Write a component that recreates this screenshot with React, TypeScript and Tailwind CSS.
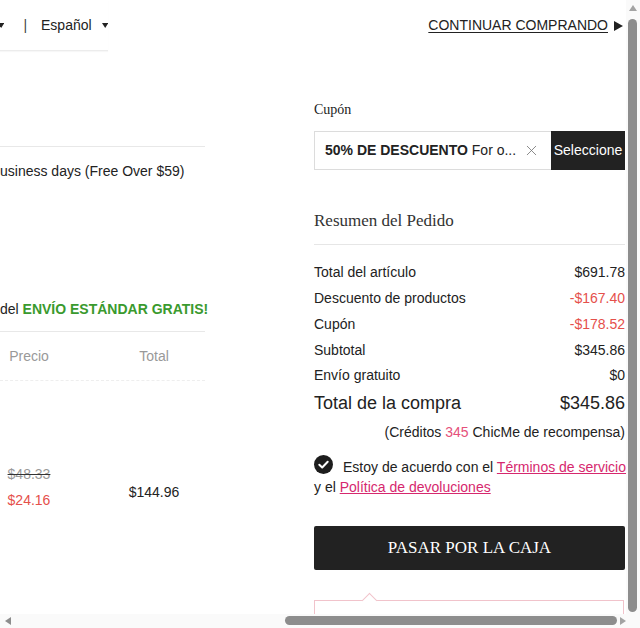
import { X } from "lucide-react";

function Caret({ className = "" }: { className?: string }) {
  return (
    <svg width="9" height="7" viewBox="0 0 9 7" className={className}>
      <path d="M0 0 H9 L4.5 7 Z" fill="#222" />
    </svg>
  );
}

function Row({ label, value, red }: { label: string; value: string; red?: boolean }) {
  return (
    <div className="flex h-[25.75px] items-center justify-between text-[14px]">
      <span>{label}</span>
      <span className={red ? "text-[#e5504b]" : ""}>{value}</span>
    </div>
  );
}

function Scrollbars() {
  return (
    <>
      {/* vertical */}
      <div className="absolute right-0 top-0 h-[628px] w-[14px] bg-[#fafafa]">
        <svg width="8" height="6" viewBox="0 0 8 6" className="absolute left-[3px] top-[5px]">
          <path d="M0 6 L4 0 L8 6 Z" fill="#a3a3a3" />
        </svg>
        <div className="absolute left-[2px] top-[19px] h-[593px] w-[9px] rounded-full bg-[#8d8d8d]" />
        <svg width="8" height="6" viewBox="0 0 8 6" className="absolute left-[3px] top-[602px]">
          <path d="M0 0 H8 L4 6 Z" fill="#8d8d8d" />
        </svg>
      </div>
      {/* horizontal */}
      <div className="absolute bottom-0 left-0 h-[14px] w-[626px] bg-[#fafafa]">
        <svg width="6" height="8" viewBox="0 0 6 8" className="absolute left-[5px] top-[3px]">
          <path d="M6 0 V8 L0 4 Z" fill="#8d8d8d" />
        </svg>
        <div className="absolute left-[285px] top-[2px] h-[9px] w-[332px] rounded-full bg-[#8d8d8d]" />
        <svg width="6" height="8" viewBox="0 0 6 8" className="absolute left-[620px] top-[3px]">
          <path d="M0 0 V8 L6 4 Z" fill="#a3a3a3" />
        </svg>
      </div>
    </>
  );
}

export default function App() {
  return (
    <div className="relative h-[628px] w-[640px] overflow-hidden bg-white font-['Liberation_Sans',Arial,sans-serif] text-[#222]">
      <div className="flex">
        {/* left column, scrolled off to the left */}
        <div className="flex w-[205px] shrink-0 flex-col">
          <div className="flex h-[51px] w-[108px] items-center border-b border-[#ececec] pt-[1px] text-[14px] shadow-[0_1px_1px_rgba(0,0,0,0.03)]">
            <Caret className="-ml-[2px]" />
            <span className="ml-[19px] text-[#444]">|</span>
            <span className="ml-[14px]">Español</span>
            <Caret className="ml-[10px]" />
          </div>
          <div className="mt-[95px] border-t border-[#e8e8e8]" />
          <div className="mt-[14px] whitespace-nowrap text-[14px] leading-[20px]">usiness days (Free Over $59)</div>
          <div className="mt-[118px] whitespace-nowrap border-b border-[#e8e8e8] pb-[12px] text-[14px] leading-[20px]">
            del <span className="font-bold text-[#3a9a2e]">ENVÍO ESTÁNDAR GRATIS!</span>
          </div>
          <div className="flex h-[49px] items-center border-b border-dashed border-[#eeeeee] text-[14px] text-[#999]">
            <span className="w-[58px] text-center">Precio</span>
            <span className="ml-[46px] w-[100px] text-center">Total</span>
          </div>
          <div className="mt-[83px] flex items-start text-[14px]">
            <div className="flex w-[58px] flex-col items-center">
              <span className="leading-[20px] text-[#999] line-through decoration-[#333]">$48.33</span>
              <span className="mt-[6px] leading-[20px] text-[#e5504b]">$24.16</span>
            </div>
            <span className="ml-[46px] mt-[18px] w-[100px] text-center leading-[20px]">$144.96</span>
          </div>
        </div>

        {/* right column: order summary */}
        <div className="ml-[109px] flex w-[311px] shrink-0 flex-col">
          <div className="flex h-[50px] items-center justify-end pr-[2px] pt-[1px] text-[14px]">
            <span className="underline underline-offset-2">CONTINUAR COMPRANDO</span>
            <svg width="9" height="10" viewBox="0 0 9 10" className="ml-[6px]">
              <path d="M0 0 L9 5 L0 10 Z" fill="#222" />
            </svg>
          </div>

          <div className="mt-[50px] font-['Liberation_Serif','Times_New_Roman',serif] text-[14px] leading-[20px]">Cupón</div>
          <div className="mt-[11px] flex h-[39px]">
            <div className="flex min-w-0 flex-1 items-center border border-r-0 border-[#dcdcdc] pl-[10px] pr-[11px] text-[14px]">
              <span className="min-w-0 flex-1 whitespace-nowrap">
                <b>50% DE DESCUENTO</b> For o...
              </span>
              <X size={17} strokeWidth={1.2} className="ml-[6px] shrink-0 text-[#777]" />
            </div>
            <div className="flex w-[74px] items-center justify-center bg-[#222] text-[14px] text-white">Seleccione</div>
          </div>

          <div className="mt-[39px] border-b border-[#e6e6e6] pb-[11px] font-['Liberation_Serif','Times_New_Roman',serif] text-[17px] leading-[24px] text-[#333]">
            Resumen del Pedido
          </div>

          <div className="mt-[15px] flex flex-col">
            <Row label="Total del artículo" value="$691.78" />
            <Row label="Descuento de productos" value="-$167.40" red />
            <Row label="Cupón" value="-$178.52" red />
            <Row label="Subtotal" value="$345.86" />
            <Row label="Envío gratuito" value="$0" />
            <div className="flex h-[30px] items-center justify-between text-[18px]">
              <span>Total de la compra</span>
              <span>$345.86</span>
            </div>
            <div className="flex h-[28px] items-center justify-end text-[14px]">
              (Créditos&nbsp;<span className="text-[#e5507a]">345</span>&nbsp;ChicMe de recompensa)
            </div>
          </div>

          <div className="mt-[10px] text-[14px] leading-[20px]">
            <div className="flex items-center whitespace-nowrap">
              <svg width="19" height="19" viewBox="0 0 19 19" className="mr-[10px] shrink-0 -translate-y-[2px]">
                <circle cx="9.5" cy="9.5" r="9.5" fill="#1d1d1d" />
                <path d="M5.3 9.7 L8.2 12.5 L13.7 6.8" stroke="white" strokeWidth="2" fill="none" strokeLinecap="round" strokeLinejoin="round" />
              </svg>
              <span>
                Estoy de acuerdo con el <span className="text-[#d6286e] underline">Términos de servicio</span>
              </span>
            </div>
            <div>
              y el <span className="text-[#d6286e] underline">Política de devoluciones</span>
            </div>
          </div>

          <div className="mt-[29px] flex h-[44px] items-center justify-center rounded-[2px] bg-[#222] font-['Liberation_Serif','Times_New_Roman',serif] text-[17px] text-white">
            PASAR POR LA CAJA
          </div>

          <div className="relative mt-[30px] h-[60px] w-[310px] border border-[#f1c3cb] bg-white">
            <div className="absolute -top-[6px] left-[49px] h-[11px] w-[11px] rotate-45 border-l border-t border-[#f1c3cb] bg-white" />
          </div>
        </div>
      </div>

      <Scrollbars />
    </div>
  );
}
